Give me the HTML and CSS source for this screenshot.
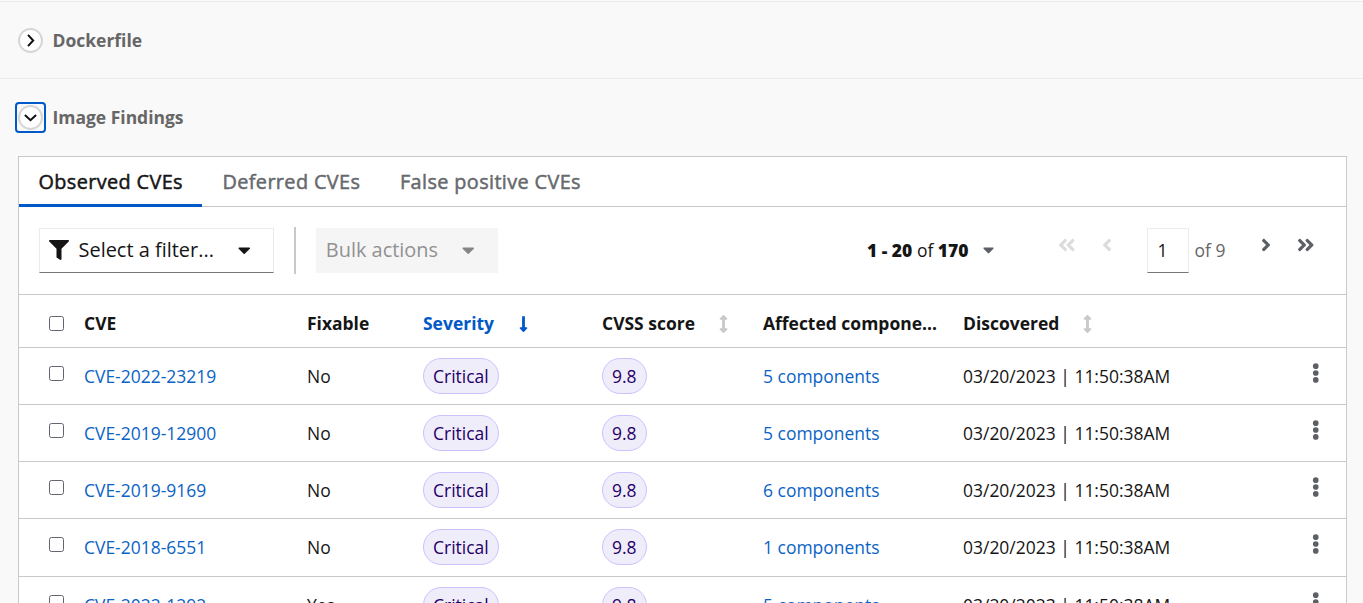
FILE: index.html
```html
<!DOCTYPE html>
<html lang="en">
<head>
<meta charset="utf-8">
<title>Image Findings</title>
<link rel="stylesheet" href="styles.css">
</head>
<body>
<svg class="defs" width="0" height="0">
  <symbol id="down" viewBox="0 0 256 512"><path d="M168 345.941V44c0-6.627-5.373-12-12-12h-56c-6.627 0-12 5.373-12 12v301.941H41.941c-21.382 0-32.09 25.851-16.971 40.971l86.059 86.059c9.373 9.373 24.569 9.373 33.941 0l86.059-86.059c15.119-15.119 4.411-40.971-16.971-40.971H168z"/></symbol>
  <symbol id="updown" viewBox="0 0 256 512"><path d="M214.059 377.941H168V134.059h46.059c21.382 0 32.09-25.851 16.971-40.971L144.971 7.029c-9.373-9.373-24.568-9.373-33.941 0L24.971 93.088c-15.119 15.119-4.411 40.971 16.971 40.971H88v243.882H41.941c-21.382 0-32.09 25.851-16.971 40.971l86.059 86.059c9.373 9.373 24.568 9.373 33.941 0l86.059-86.059c15.12-15.119 4.412-40.971-16.97-40.971z"/></symbol>
  <symbol id="angle" viewBox="0 0 256 512"><path d="M224.3 273l-136 136c-9.4 9.4-24.6 9.4-33.9 0l-22.6-22.6c-9.4-9.4-9.4-24.6 0-33.9l96.4-96.4-96.4-96.4c-9.4-9.4-9.4-24.6 0-33.9L54.3 103c9.4-9.4 24.6-9.4 33.9 0l136 136c9.5 9.4 9.5 24.6.1 34z"/></symbol>
  <symbol id="angles" viewBox="0 0 448 512"><path id="one" d="M224.3 273l-136 136c-9.4 9.4-24.6 9.4-33.9 0l-22.6-22.6c-9.4-9.4-9.4-24.6 0-33.9l96.4-96.4-96.4-96.4c-9.4-9.4-9.4-24.6 0-33.9L54.3 103c9.4-9.4 24.6-9.4 33.9 0l136 136c9.5 9.4 9.5 24.6.1 34z"/><use href="#one" x="192"/></symbol>
  <symbol id="filter" viewBox="0 0 512 512"><path d="M487.976 0H24.028C2.71 0-8.047 25.866 7.058 40.971L192 225.941V432c0 7.831 3.821 15.17 10.237 19.662l80 55.98C298.02 518.69 320 507.493 320 487.98V225.941l184.947-184.97C520.021 25.896 509.338 0 487.976 0z"/></symbol>
  <symbol id="caret" viewBox="0 0 320 512"><path d="M31.3 192h257.3c17.8 0 26.7 21.5 14.1 34.1L174.1 354.8c-7.8 7.8-20.5 7.8-28.3 0L17.2 226.1C4.6 213.5 13.5 192 31.3 192z"/></symbol>
  <symbol id="kebab" viewBox="0 0 192 512"><circle cx="96" cy="80" r="72"/><circle cx="96" cy="256" r="72"/><circle cx="96" cy="432" r="72"/></symbol>
</svg>

<section class="section first">
  <button class="toggle"><svg viewBox="0 0 21 21"><path d="M8 4.9l5.2 5.6L8 16.1"/></svg></button>
  <h2>Dockerfile</h2>
</section>
<section class="section second">
  <button class="toggle focused"><svg viewBox="0 0 21 21"><path d="M4.9 8l5.6 5.2L16.1 8"/></svg></button>
  <h2>Image Findings</h2>
</section>

<main class="panel">
  <nav class="tabs">
    <a class="tab active"><span>Observed CVEs</span></a>
    <a class="tab deferred"><span>Deferred CVEs</span></a>
    <a class="tab positive"><span>False positive CVEs</span></a>
  </nav>
  <div class="toolbar">
    <div class="select"><svg class="funnel"><use href="#filter"/></svg><span>Select a filter...</span><svg class="caret"><use href="#caret"/></svg></div>
    <i class="divider"></i>
    <div class="bulk"><span>Bulk actions</span><svg class="caret"><use href="#caret"/></svg></div>
    <div class="range"><span><b>1 - 20</b> of <b>170</b></span><svg class="caret small"><use href="#caret"/></svg></div>
    <div class="pager">
      <svg class="dbl off flip"><use href="#angles"/></svg>
      <svg class="sgl off flip"><use href="#angle"/></svg>
      <div class="page">1</div><span class="pages">of 9</span>
      <svg class="sgl next"><use href="#angle"/></svg>
      <svg class="dbl last"><use href="#angles"/></svg>
    </div>
  </div>
  <div class="row head">
    <i class="check"></i><span class="cve">CVE</span><span>Fixable</span>
    <span class="sort on"><span>Severity</span><svg><use href="#down"/></svg></span>
    <span class="sort cvss"><span>CVSS score</span><svg><use href="#updown"/></svg></span>
    <span class="affected">Affected compone...</span>
    <span class="sort disc"><span>Discovered</span><svg><use href="#updown"/></svg></span>
  </div>
  <div class="row"><i class="check"></i><a>CVE-2022-23219</a><span>No</span><span class="label">Critical</span><span class="label">9.8</span><a>5 components</a><span class="date">03/20/2023 | 11:50:38AM</span><svg class="kebab"><use href="#kebab"/></svg></div>
  <div class="row"><i class="check"></i><a>CVE-2019-12900</a><span>No</span><span class="label">Critical</span><span class="label">9.8</span><a>5 components</a><span class="date">03/20/2023 | 11:50:38AM</span><svg class="kebab"><use href="#kebab"/></svg></div>
  <div class="row"><i class="check"></i><a>CVE-2019-9169</a><span>No</span><span class="label">Critical</span><span class="label">9.8</span><a>6 components</a><span class="date">03/20/2023 | 11:50:38AM</span><svg class="kebab"><use href="#kebab"/></svg></div>
  <div class="row tall"><i class="check"></i><a>CVE-2018-6551</a><span>No</span><span class="label">Critical</span><span class="label">9.8</span><a>1 components</a><span class="date">03/20/2023 | 11:50:38AM</span><svg class="kebab"><use href="#kebab"/></svg></div>
  <div class="row"><i class="check"></i><a>CVE-2022-1292</a><span>Yes</span><span class="label">Critical</span><span class="label">9.8</span><a>5 components</a><span class="date">03/20/2023 | 11:50:38AM</span><svg class="kebab"><use href="#kebab"/></svg></div>
</main>
</body>
</html>
```
FILE: styles.css
```css
* { box-sizing: border-box; }
html { height: 100%; overflow: hidden; }
body {
  margin: 0; height: 100%; overflow: hidden; background: #f9f9f9; color: #151515;
  font: 17.48px/26px "Open Sans", "Noto Sans", sans-serif;
}
svg { display: block; fill: currentColor; flex: none; }
.defs { position: absolute; }
a { color: #0b63c5; text-decoration: none; }

.section { display: flex; align-items: center; padding-left: 18px; border-top: 1px solid #ebebeb; }
.section.first { height: 77px; margin-top: 1px; }
.section.second { height: 78px; }
.section h2 { margin: 0 0 0 9.5px; font-size: 17.48px; line-height: 26px; font-weight: 700; color: #666; }
.section.first h2 { padding-bottom: 1px; }
.section.second h2 { padding-bottom: 2px; }
.toggle {
  width: 25px; height: 25px; padding: 0; border: 2px solid #d6d6d6; border-radius: 50%;
  background: #fff; color: #111; display: grid; place-items: center;
}
.toggle svg { width: 21px; height: 21px; fill: none; stroke: currentColor; stroke-width: 2; }
.toggle.focused {
  width: 31px; height: 31px; margin: 0 -3px; border: 2px solid #0059c8; border-radius: 4px;
  background: #f9f9f9;
}
.toggle.focused svg { width: 25px; height: 25px; border: 2px solid #d6d6d6; border-radius: 50%; background: #fff; }

.panel { width: 1329px; margin-left: 18px; background: #fff; border: 1px solid #c9c9c9; }
.tabs {
  display: flex; height: 50px; border-bottom: 1px solid #c9c9c9;
  font-size: 19.85px; letter-spacing: .38px; -webkit-text-stroke: .5px currentColor;
}
.tab { height: 50px; padding: 12px 0 0 20px; color: #66696d; white-space: nowrap; }
.tab.active { width: 183px; padding-left: 19.5px; color: #151515; border-bottom: 3px solid #0059c8; }
.tab.deferred { width: 178px; padding-left: 20.5px; }

.toolbar { display: flex; height: 88px; padding: 21px 0 0 20px; border-bottom: 1px solid #c9c9c9; white-space: nowrap; }
.select, .bulk { display: flex; align-items: center; height: 45px; font-size: 19.95px; }
.select { width: 235px; padding-left: 9px; border: 1px solid #ebebeb; border-bottom-color: #777; }
.select span, .bulk span { padding-bottom: 2px; }
.funnel { width: 20px; height: 20px; margin: 0 9.5px 2px 0; }
.select span { width: 159px; }
.caret { width: 12.5px; height: 20px; margin-bottom: 1.5px; }
.divider { width: 2px; height: 47px; margin: -1px 20px 0; background: #c9c9c9; }
.bulk { width: 182px; padding-left: 9.8px; background: #f5f5f5; color: #919191; }
.bulk span { width: 136px; }
.bulk .caret { color: #858585; }
.range { display: flex; align-items: center; height: 45px; width: 191px; margin-left: 369px; }
.range span { width: 115.5px; padding-bottom: 2px; }
.range b { font-weight: 800; }
.caret.small { width: 11px; height: 17.5px; margin-bottom: 1px; color: #5c5f64; }
.pager { display: flex; color: #5c5f64; }
.dbl { width: 17.5px; height: 20px; margin-top: 7px; }
.sgl { width: 10px; height: 20px; margin-top: 7px; }
.off { color: #dcdcdc; }
.flip { transform: scaleX(-1); }
.sgl.off { margin-left: 26px; margin-right: 35px; }
.page { width: 42px; height: 45px; padding: 8px 0 0 10px; border: 1px solid #ebebeb; border-bottom-color: #777; color: #151515; }
.pages { width: 72px; padding: 9px 0 0 6px; color: #666; }
.last { margin-left: 26px; }

.row {
  display: grid; grid-template-columns: 35px 223px 116px 179px 161px 200px 349px 10px;
  align-items: center; height: 57px; padding-left: 30px; border-bottom: 1px solid #c9c9c9;
  white-space: nowrap;
}
.row.tall { height: 58px; padding-bottom: 1px; }
.row.head { height: 53px; font-weight: 700; padding-top: 5px; }
.head > span:not(.sort), .sort > span { padding-bottom: 2px; }
.check { width: 15px; height: 15px; border: 1px solid #62656d; border-radius: 2.5px; background: #fff; }
.row:not(.head) .check { margin-bottom: 5px; }
.label {
  justify-self: start; height: 36px; padding: 4px 9px 0; border: 1px solid #cbc1ff; border-radius: 18px;
  background: #f0edfb; color: #1f0066;
}
.sort { display: flex; align-items: center; }
.sort svg { width: 9px; height: 18px; color: #c9c9c9; }
.sort > span { width: 96px; }
.sort.on, .sort.on svg { color: #0059c8; }
.cvss > span { width: 117px; }
.disc > span { width: 120px; }
.kebab { width: 7.5px; height: 20px; color: #5c5f64; margin-bottom: 7px; }
```
